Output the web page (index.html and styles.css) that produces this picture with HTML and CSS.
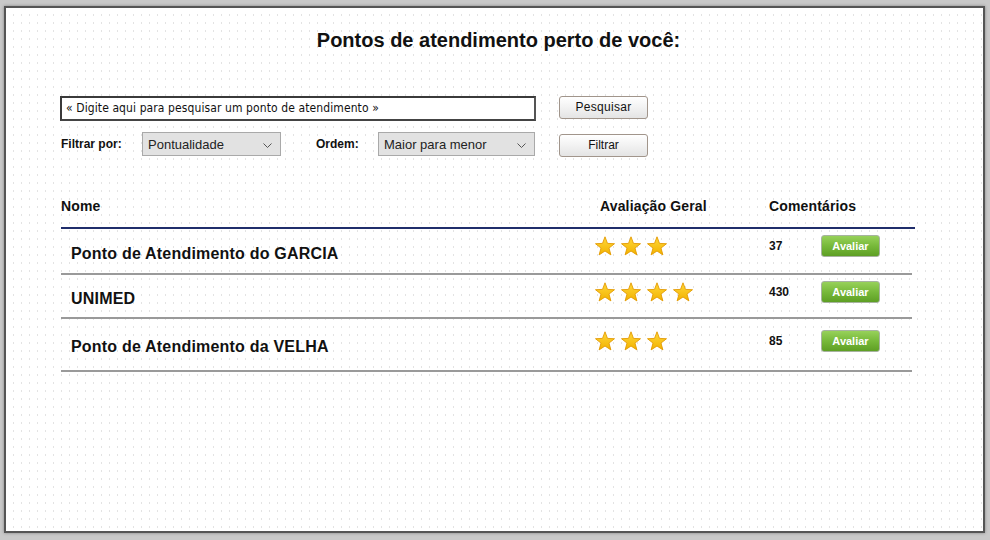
FILE: index.html
```html
<!DOCTYPE html>
<html lang="pt-BR">
<head>
<meta charset="utf-8">
<title>Pontos de atendimento</title>
<link rel="stylesheet" href="styles.css">
</head>
<body>
<svg class="defs" width="0" height="0" aria-hidden="true">
  <defs>
    <linearGradient id="starfill" x1="0" y1="0" x2="0" y2="1">
      <stop offset="0" stop-color="#ffd83a"/>
      <stop offset="1" stop-color="#f2b200"/>
    </linearGradient>
    <symbol id="star" viewBox="0 0 20 20">
      <path d="M10 0.8 L12.47 7.4 L19.51 7.71 L13.99 12.1 L15.88 18.89 L10 15 L4.12 18.89 L6.01 12.1 L0.49 7.71 L7.53 7.4 Z" fill="url(#starfill)" stroke="#e39a00" stroke-width="0.9" stroke-linejoin="round"/>
    </symbol>
    <symbol id="chev" viewBox="0 0 9 5">
      <path d="M0.5 0.5 L4.5 4.5 L8.5 0.5" fill="none" stroke="#555" stroke-width="1"/>
    </symbol>
  </defs>
</svg>
<div class="frame">
  <h1 class="title">Pontos de atendimento perto de você:</h1>

  <div class="search-row">
    <div class="search-input">« Digite aqui para pesquisar um ponto de atendimento »</div>
    <button class="btn btn-search">Pesquisar</button>
  </div>

  <div class="filter-row">
    <span class="label label-filter">Filtrar por:</span>
    <div class="select select-a"><span>Pontualidade</span><svg class="chev"><use href="#chev"/></svg></div>
    <span class="label label-order">Ordem:</span>
    <div class="select select-b"><span>Maior para menor</span><svg class="chev"><use href="#chev"/></svg></div>
    <button class="btn btn-filter">Filtrar</button>
  </div>

  <div class="table">
    <div class="thead">
      <span class="th th-name">Nome</span>
      <span class="th th-rating">Avaliação Geral</span>
      <span class="th th-comments">Comentários</span>
    </div>

    <div class="row row-1">
      <span class="name">Ponto de Atendimento do GARCIA</span>
      <span class="stars"><svg class="star"><use href="#star"/></svg><svg class="star"><use href="#star"/></svg><svg class="star"><use href="#star"/></svg></span>
      <span class="count">37</span>
      <button class="btn-rate">Avaliar</button>
    </div>

    <div class="row row-2">
      <span class="name">UNIMED</span>
      <span class="stars"><svg class="star"><use href="#star"/></svg><svg class="star"><use href="#star"/></svg><svg class="star"><use href="#star"/></svg><svg class="star"><use href="#star"/></svg></span>
      <span class="count">430</span>
      <button class="btn-rate">Avaliar</button>
    </div>

    <div class="row row-3">
      <span class="name">Ponto de Atendimento da VELHA</span>
      <span class="stars"><svg class="star"><use href="#star"/></svg><svg class="star"><use href="#star"/></svg><svg class="star"><use href="#star"/></svg></span>
      <span class="count">85</span>
      <button class="btn-rate">Avaliar</button>
    </div>
  </div>
</div>
</body>
</html>
```

FILE: styles.css
```css
* { box-sizing: border-box; }

html {
  background: #c9c9c9;
}

html, body {
  margin: 0;
  padding: 0;
  height: 540px;
  overflow: hidden;
}

body {
  background: #c9c9c9;
  font-family: "Liberation Sans", Arial, sans-serif;
  color: #111;
  padding: 6px 0 0 4px;
}

.defs { position: absolute; width: 0; height: 0; }

.frame {
  width: 981px;
  height: 527px;
  border: 2px solid #555;
  background-color: #fff;
  background-image:
    linear-gradient(to bottom, transparent 2px, #fff 2px),
    linear-gradient(to right, #e3e3e3 1px, #fff 1px);
  background-size: 8px 8px, 8px 8px;
  background-position: 7px 6px, 7px 6px;
  box-shadow: 0 0 3px rgba(0,0,0,0.35);
  padding: 0 0 0 55px;
  display: flex;
  flex-direction: column;
}

.title {
  margin: 0;
  padding: 20px 0 0 0;
  margin-left: -55px;
  font-size: 20px;
  line-height: 24px;
  font-weight: bold;
  text-align: center;
  color: #111;
  transform: translateX(4px);
}

/* search row */
.search-row {
  display: flex;
  align-items: flex-start;
  margin-top: 44px;
  margin-left: -1px;
}

.search-input {
  width: 476px;
  height: 25px;
  border: 2px solid #3a3a3a;
  border-right-color: #555;
  border-bottom-color: #444;
  background: #fff;
  padding: 0 0 0 4px;
  font-family: "DejaVu Sans Condensed", "DejaVu Sans", sans-serif;
  font-size: 12px;
  line-height: 21px;
  letter-spacing: 0.1px;
  color: #111;
  white-space: nowrap;
}

.btn {
  font-family: "Liberation Sans", Arial, sans-serif;
  font-size: 12px;
  color: #111;
  width: 89px;
  height: 23px;
  border: 1px solid #a1958b;
  border-radius: 3px;
  background: linear-gradient(#ffffff, #f2f2f2 50%, #e4e4e4);
  padding: 0;
  line-height: 21px;
  text-align: center;
}

.btn-search { margin-left: 23px; letter-spacing: 0.3px; }

/* filter row */
.filter-row {
  display: flex;
  align-items: flex-start;
  margin-top: 11px;
  height: 25px;
}

.label {
  font-size: 12px;
  font-weight: bold;
  line-height: 14px;
  margin-top: 5px;
}

.label-filter { width: 81px; }
.label-order { width: 62px; margin-left: 35px; }

.select {
  height: 24px;
  background: #e2e2e2;
  border: 1px solid #a9a9a9;
  display: flex;
  align-items: center;
  justify-content: space-between;
  padding: 0 8px 0 5px;
  font-size: 13px;
  color: #222;
}

.select-a { width: 139px; }
.select-b { width: 157px; }

.chev { width: 9px; height: 5px; margin-top: 2px; }

.btn-filter { margin-left: 24px; margin-top: 2px; }

/* table */
.table {
  display: flex;
  flex-direction: column;
}

.thead {
  width: 854px;
  margin-top: 41px;
  height: 31px;
  border-bottom: 2px solid #1f2d6b;
  display: grid;
  grid-template-columns: 539px 169px 1fr;
  align-items: start;
}

.th {
  font-size: 14px;
  font-weight: bold;
  line-height: 16px;
  letter-spacing: 0.15px;
}

.row {
  width: 851px;
  display: grid;
  grid-template-columns: 534px 174px 52px 59px;
  align-items: start;
  border-bottom: 2px solid;
  border-image: linear-gradient(#6a6a6a, #9a9a9a) 1;
}

.row-1 { height: 46px; }
.row-2 { height: 44px; }
.row-3 { height: 53px; padding-top: 5px; }

.name {
  padding-left: 10px;
  margin-top: 16px;
  font-size: 16px;
  font-weight: bold;
  line-height: 18px;
  letter-spacing: 0.2px;
  white-space: nowrap;
}

.row-2 .name { margin-top: 15px; }
.row-3 .name { margin-top: 14px; }

.stars {
  display: flex;
  gap: 6px;
  margin-top: 7px;
}

.star { width: 20px; height: 20px; display: block; }

.count {
  margin-top: 10px;
  font-size: 12px;
  font-weight: bold;
  line-height: 14px;
}

.btn-rate {
  margin-top: 6px;
  width: 59px;
  height: 22px;
  border: 1px solid #a7b3a0;
  border-radius: 3px;
  background: linear-gradient(#97d15a, #77b93a 50%, #5e9f24);
  color: #fff;
  font-family: "Liberation Sans", Arial, sans-serif;
  font-size: 11px;
  font-weight: bold;
  line-height: 20px;
  padding: 0;
  text-align: center;
}
```
